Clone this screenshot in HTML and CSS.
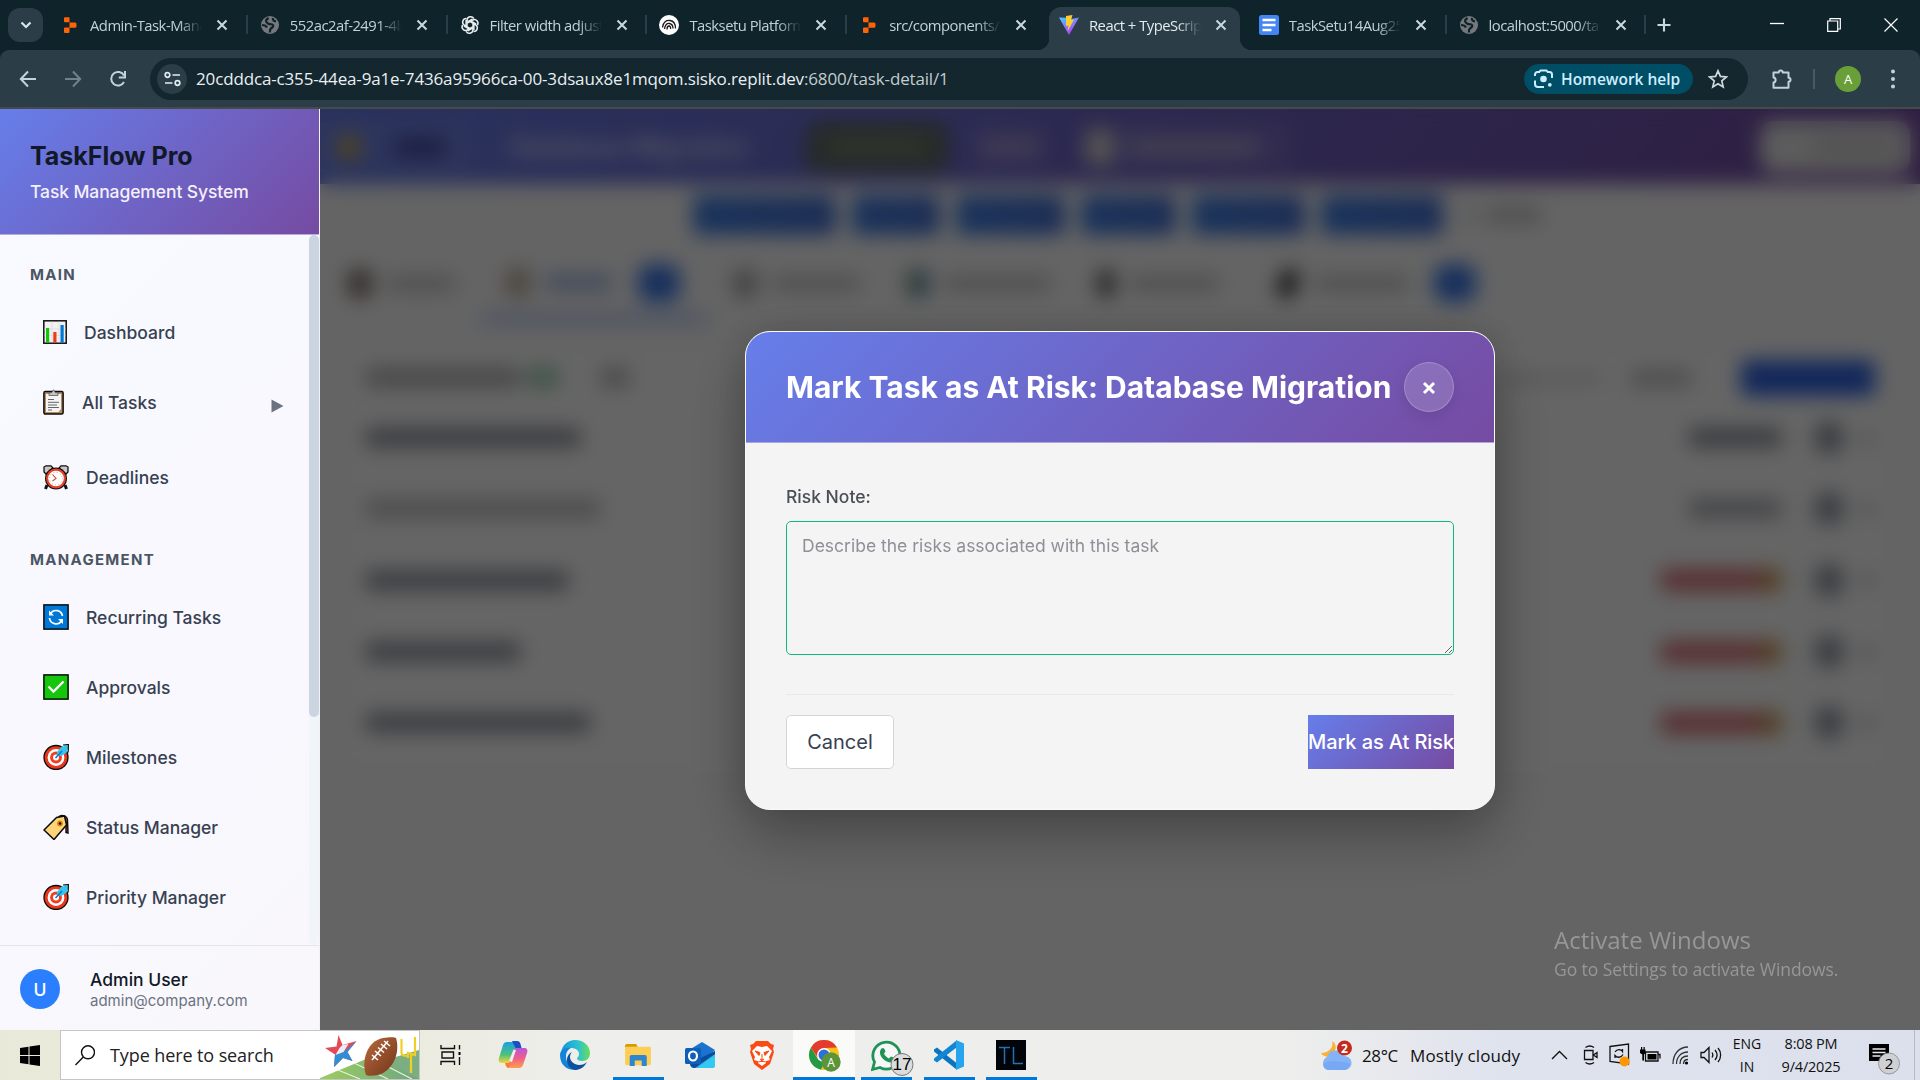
FILE: index.html
```html
<!DOCTYPE html>
<html lang="en">
<head>
<meta charset="utf-8">
<title>TaskFlow Pro</title>
<link rel="stylesheet" href="styles.css">
</head>
<body>
<svg class="defs" width="0" height="0" aria-hidden="true">
  <defs>
    <symbol id="close" viewBox="0 0 12 12"><path d="M1.5 1.5l9 9M10.5 1.5l-9 9" stroke="currentColor" stroke-width="2" fill="none"/></symbol>
    <symbol id="replit" viewBox="0 0 20 20"><path d="M4 3.2a1 1 0 0 1 1-1h4.500v5H5a1 1 0 0 1-1-1zM9.500 7.500h5.500a1.500 1.500 0 0 1 1.500 1.500v2.200a1.500 1.500 0 0 1-1.500 1.500H9.500zM4 13.500a1 1 0 0 1 1-1h4.500v4.500a1 1 0 0 1-1 1H5a1 1 0 0 1-1-1z" fill="#ff6308"/></symbol>
    <symbol id="globe" viewBox="0 0 20 20"><circle cx="10" cy="10" r="9" fill="#75797c"/><path d="M8.500 3C5.500 5 5 6.500 8 8.500c2.500 1.500 4 0 5 1.500s-.5 2.500-2 3.500-1 2.500-1 4M2 10c2 0 4 .5 5 2.500M13 3c-.5 2 .5 3 3 3.500" fill="none" stroke="#0f232b" stroke-width="2.200"/></symbol>
    <symbol id="target" viewBox="0 0 26 26"><circle cx="13" cy="13.500" r="12" fill="#e8371a" stroke="#0b0b0b" stroke-width="1.300"/><circle cx="13" cy="13.500" r="8.400" fill="#fff"/><circle cx="13" cy="13.500" r="5.900" fill="#ef3f22"/><circle cx="13" cy="13.500" r="3" fill="#fff"/><path d="M14 8l5-6 2 .5.500-1.500 4 .5-.5 4-1 .5.500 2-6 4-4.500-1z" fill="#35c4ee"/><path d="M20 1l5.500-.5-.3 7-1 2" fill="none" stroke="#111" stroke-width="1.200"/><path d="M12.500 14l6.500-7" stroke="#0b78c8" stroke-width="1.500"/></symbol>
  </defs>
</svg>

<header class="tabstrip">
  <button class="tabsearch"><svg width="14" height="14" viewBox="0 0 14 14"><path d="M2.500 4.500L7 9l4.500-4.500" fill="none" stroke="currentColor" stroke-width="2.200"/></svg></button>
  <div class="tab"><svg class="fav"><use href="#replit"/></svg><span class="tt">Admin-Task-Manager</span><svg class="x"><use href="#close"/></svg></div>
  <div class="tab"><svg class="fav"><use href="#globe"/></svg><span class="tt">552ac2af-2491-4b1e</span><svg class="x"><use href="#close"/></svg></div>
  <div class="tab"><svg class="fav" viewBox="0 0 20 20"><g fill="none" stroke="#e9eef0" stroke-width="1.500"><path id="petal" d="M7 11.500V5.200a3.600 3.600 0 0 1 6.800-1.500M7 7.200l5.300-3"/><use href="#petal" transform="rotate(60 10 10)"/><use href="#petal" transform="rotate(120 10 10)"/><use href="#petal" transform="rotate(180 10 10)"/><use href="#petal" transform="rotate(240 10 10)"/><use href="#petal" transform="rotate(300 10 10)"/></g></svg><span class="tt">Filter width adjustment</span><svg class="x"><use href="#close"/></svg></div>
  <div class="tab"><svg class="fav" viewBox="0 0 20 20"><circle cx="10" cy="10" r="10" fill="#fff"/><g fill="none" stroke="#1b1b1b" stroke-width="1.300"><path d="M3.500 12.500C4 7 7.500 5 11 5.500s5.500 4 5.500 8"/><path d="M5.500 14c.5-4 2.500-6 5-5.500s3.500 3 3.500 5"/><path d="M8 14.500c0-2.500 1-3.500 2-3.500s2 1.500 1.500 3"/></g></svg><span class="tt">Tasksetu Platform</span><svg class="x"><use href="#close"/></svg></div>
  <div class="tab nosep"><svg class="fav"><use href="#replit"/></svg><span class="tt">src/components/tasks</span><svg class="x"><use href="#close"/></svg></div>
  <div class="tab active"><svg class="fav" viewBox="0 0 20 20"><defs><linearGradient id="v" x1="0" y1="0" x2=".6" y2="1"><stop offset="0" stop-color="#41d1ff"/><stop offset="1" stop-color="#bd34fe"/></linearGradient></defs><path d="M0 2.500l10 17.500L20 2.500l-6.500 1.200-6-1z" fill="url(#v)"/><path d="M7 1l6.500-1-1.500 5 3-.5L8.500 16.500l1-6L7 11z" fill="#ffcf2e"/></svg><span class="tt">React + TypeScript</span><svg class="x"><use href="#close"/></svg></div>
  <div class="tab"><svg class="fav" viewBox="0 0 20 20"><rect width="20" height="20" rx="2.500" fill="#4285f4"/><path d="M3.500 5h13M3.500 10h13M3.500 15h9" stroke="#fff" stroke-width="2.400"/></svg><span class="tt">TaskSetu14Aug25</span><svg class="x"><use href="#close"/></svg></div>
  <div class="tab"><svg class="fav"><use href="#globe"/></svg><span class="tt">localhost:5000/tasks</span><svg class="x"><use href="#close"/></svg></div>
  <svg class="newtab" width="14" height="14" viewBox="0 0 14 14"><path d="M7 .5v13M.5 7h13" stroke="currentColor" stroke-width="2.100"/></svg>
  <div class="winbtns">
    <svg width="14" height="14" viewBox="0 0 14 14"><path d="M0 5.500h14" stroke="#fff" stroke-width="1.300"/></svg>
    <svg width="14" height="14" viewBox="0 0 14 14"><path d="M.7 3h10v10.300H.7zM3 3V.7h10.300V11h-2.500" fill="none" stroke="#fff" stroke-width="1.200"/></svg>
    <svg width="14" height="14" viewBox="0 0 14 14"><path d="M.5.5l13 13M13.500.5l-13 13" stroke="#fff" stroke-width="1.200"/></svg>
  </div>
</header>

<nav class="toolbar">
  <svg width="18" height="18" viewBox="0 0 18 18"><path d="M17 9H2.500M9 1.500L1.800 9 9 16.500" fill="none" stroke="#c3d3da" stroke-width="2"/></svg>
  <svg width="18" height="18" viewBox="0 0 18 18"><path d="M1 9h14.500M9 1.500L16.200 9 9 16.500" fill="none" stroke="#71828a" stroke-width="2"/></svg>
  <svg width="18" height="18" viewBox="0 0 18 18"><path d="M15 12a6.800 6.800 0 1 1 0-6.500" fill="none" stroke="#c3d3da" stroke-width="2"/><path d="M16 1v6.500H9.800" fill="none" stroke="#c3d3da" stroke-width="2"/></svg>
  <div class="omnibox">
    <span class="tune"><svg width="17" height="16" viewBox="0 0 17 16"><g fill="none" stroke="#e4edf0" stroke-width="1.700"><circle cx="3.500" cy="4" r="2.300"/><path d="M8.500 4H16M1 12h7.500"/><circle cx="13.500" cy="12" r="2.300"/></g></svg></span>
    <span class="url">20cdddca-c355-44ea-9a1e-7436a95966ca-00-3dsaux8e1mqom.sisko.replit.dev<span class="path">:6800/task-detail/1</span></span>
    <span class="lens"><svg width="19" height="19" viewBox="0 0 19 19"><g fill="none" stroke="#cdeeff" stroke-width="2"><path d="M1 7V5.500A2.500 2.500 0 0 1 3.500 3h1.800L6.500 1.500h6L13.700 3h1.800A2.500 2.500 0 0 1 18 5.500V9M1 11.500V15a3 3 0 0 0 3 3h6"/></g><circle cx="9.500" cy="10" r="3.300" fill="#cdeeff"/><circle cx="15.800" cy="15.800" r="1.900" fill="#cdeeff"/></svg><b>Homework help</b></span>
    <svg class="star" width="20" height="20" viewBox="0 0 20 20"><path d="M10 1.800l2.400 5.600 6 .5-4.600 4 1.400 6L10 14.700l-5.200 3.200 1.400-6-4.600-4 6-.5z" fill="none" stroke="#cfd9dd" stroke-width="1.700"/></svg>
  </div>
  <svg class="ext" width="22" height="22" viewBox="0 0 22 22"><path d="M2.500 4.500h5.200a2 2 0 1 1 4 0h5.800v5.200a2 2 0 1 1 0 4v6h-15v-5.200c2.800-.2 2.800-4.800 0-5z" fill="none" stroke="#c3d3da" stroke-width="2" stroke-linejoin="round"/></svg>
  <i class="vsep"></i>
  <span class="ava">A</span>
  <svg class="dots" width="4" height="20" viewBox="0 0 4 20"><g fill="#c3d3da"><circle cx="2" cy="2.500" r="2"/><circle cx="2" cy="10" r="2"/><circle cx="2" cy="17.500" r="2"/></g></svg>
</nav>

<div class="page">
  <aside class="sidebar">
    <div class="brand"><h1>TaskFlow Pro</h1><p>Task Management System</p></div>
    <div class="menu">
      <div class="links">
        <h2>MAIN</h2>
        <a class="it"><svg width="24" height="24" viewBox="0 0 24 24"><rect x=".8" y=".8" width="22.400" height="22.400" fill="#f2f2f2" stroke="#1c1c1c" stroke-width="1.600"/><path d="M9 1.500v21M16 1.500v21M1.500 9h21M1.500 15.500h21" stroke="#dcdcdc" stroke-width=".8"/><path d="M3 8h3.200v14.400H3z" fill="#16c60c"/><path d="M10.300 12h3.200v10.400h-3.200z" fill="#f03a17"/><path d="M17.500 5h3.200v17.400h-3.200z" fill="#0078d7"/></svg>Dashboard</a>
        <a class="it all"><svg width="21" height="26" viewBox="0 0 21 26"><rect x=".9" y="2.500" width="19.200" height="22.600" rx="1.500" fill="#b98a5e" stroke="#0b0b0b" stroke-width="1.500"/><path d="M3 5h15v15l-2.500 3H3z" fill="#f4f4f4"/><path d="M6 6.500V3.800h2.500L10.500.8l2 3H15v2.700z" fill="#c3c6c4" stroke="#4a4a4a" stroke-width=".7"/><path d="M5 10.500h6M5 13.300h11M5 16h9M5 18.500h11M5 21h4" stroke="#555" stroke-width=".9"/></svg>All Tasks<svg class="arrow" width="13" height="14" viewBox="0 0 13 14"><path d="M.5.500L12.500 7 .5 13.500z" fill="#6b7280"/></svg></a>
        <a class="it wide last"><svg width="26" height="25" viewBox="0 0 26 25"><path d="M4 20l-1.500 4M22 20l1.500 4" stroke="#111" stroke-width="3"/><path d="M1 7V2l2-1.200h5L10 3 3 9zM25 7V2L23 .8h-5L16 3l7 6z" fill="#c9c9c9" stroke="#111" stroke-width="1.300"/><circle cx="13" cy="13.500" r="11" fill="#111"/><circle cx="13" cy="13.500" r="10" fill="#e8432a"/><circle cx="13" cy="13.500" r="7.800" fill="#fff"/><circle cx="13" cy="13.500" r="6.300" fill="none" stroke="#999" stroke-dasharray=".8 2.500"/><path d="M9.500 9.500l3.500 4-3.500 2.500" fill="none" stroke="#d3482d" stroke-width="1.100"/></svg>Deadlines</a>
        <h2 class="mg">MANAGEMENT</h2>
        <a class="it wide"><svg width="26" height="26" viewBox="0 0 26 26"><rect x=".9" y=".9" width="24.200" height="24.200" fill="#0078d7" stroke="#0a0a0a" stroke-width="1.500"/><path d="M7.500 9.500A6.600 6.600 0 0 1 19.500 12M18.500 17A6.600 6.600 0 0 1 6.500 14" fill="none" stroke="#fff" stroke-width="1.700"/><path d="M6 6.500v5h5zM20 20v-5h-5z" fill="#fff"/></svg>Recurring Tasks</a>
        <a class="it wide"><svg width="26" height="26" viewBox="0 0 26 26"><rect x=".9" y=".9" width="24.200" height="24.200" fill="#16c60c" stroke="#0a0a0a" stroke-width="1.500"/><path d="M5.500 12.500l5 5L20.500 7.500" fill="none" stroke="#fff" stroke-width="2.300"/></svg>Approvals</a>
        <a class="it wide"><svg width="26" height="26"><use href="#target"/></svg>Milestones</a>
        <a class="it wide"><svg width="26" height="26" viewBox="0 0 26 26"><path d="M15 4c2-4 9-3 9.500 2l.5 13-2-.5V8" fill="#c5401f" stroke="#0b0b0b" stroke-width="1.400"/><path d="M1 16L13.500 3.500l8-1.500 2 9L11 25.500z" fill="#ffd479" stroke="#0b0b0b" stroke-width="1.500" stroke-linejoin="round"/><circle cx="17" cy="9.500" r="2.900" fill="#d98a0b"/><circle cx="17" cy="9.500" r="1.300" fill="#241000"/></svg>Status Manager</a>
        <a class="it wide"><svg width="26" height="26"><use href="#target"/></svg>Priority Manager</a>
      </div>
      <div class="track"><div class="thumb"></div></div>
    </div>
    <div class="user"><span class="uava">U</span><div><strong>Admin User</strong><small>admin@company.com</small></div></div>
  </aside>

  <main class="main">
    <div class="hd">
      <span class="back"><i class="sm ye"></i><i class="sm dk"></i></span>
      <h2 class="tn">Database Migration</h2>
      <span class="status"><i></i></span>
      <span class="prio"><i></i></span>
      <span class="who"><i class="face"></i><i class="nm"></i></span>
      <span class="more"><i></i></span>
    </div>
    <div class="acts">
      <i style="width:143px"></i><i style="width:88px"></i><i style="width:109px"></i><i style="width:95px"></i><i style="width:113px"></i><i style="width:122px"></i><b></b><b class="w2"></b>
    </div>
    <div class="ptabs">
      <span style="width:134px"><i class="ic br"></i><i class="lb" style="width:66px"></i></span>
      <span class="on" style="width:225px"><i class="ic"></i><i class="lb bl" style="width:66px"></i><i class="bd"></i></span>
      <span style="width:175px"><i class="ic gy"></i><i class="lb" style="width:86px"></i></span>
      <span style="width:186px"><i class="ic gn"></i><i class="lb" style="width:104px"></i></span>
      <span style="width:178px"><i class="ic bk"></i><i class="lb" style="width:88px"></i></span>
      <span style="width:226px"><i class="ic cl"></i><i class="lb" style="width:92px"></i><i class="bd"></i></span>
    </div>
    <div class="card">
      <div class="chead"><i class="c1"></i><i class="c2"></i><i class="c3"></i><i class="c4"></i><i class="c5"></i><i class="c6"></i></div>
      <div class="row"><i class="nm" style="width:214px"></i><i class="dt"></i><i class="av"></i><i class="dd"></i></div>
      <div class="row"><i class="nm lt" style="width:234px"></i><i class="dt lt"></i><i class="av"></i><i class="dd"></i></div>
      <div class="row"><i class="nm" style="width:202px"></i><i class="dt rd"></i><i class="av"></i><i class="dd"></i></div>
      <div class="row"><i class="nm" style="width:154px"></i><i class="dt rd"></i><i class="av"></i><i class="dd"></i></div>
      <div class="row"><i class="nm" style="width:224px"></i><i class="dt rd"></i><i class="av"></i><i class="dd"></i></div>
    </div>
    <div class="overlay">
      <section class="modal">
        <div class="mhead"><h3>Mark Task as At Risk: Database Migration</h3><button class="mclose"><svg width="14" height="14" viewBox="0 0 14 14"><path d="M2 2l10 10M12 2L2 12" stroke="#fff" stroke-width="3"/></svg></button></div>
        <div class="mbody">
          <label>Risk Note:</label>
          <textarea placeholder="Describe the risks associated with this task"></textarea>
          <div class="mfoot"><button class="cancel">Cancel</button><button class="go">Mark as At Risk</button></div>
        </div>
      </section>
    </div>
    <div class="activate"><p>Activate Windows</p><small>Go to Settings to activate Windows.</small></div>
  </main>
</div>

<footer class="taskbar">
  <span class="start"><svg width="20" height="21" viewBox="0 0 20 21"><path d="M0 3l8.500-1.300v8.300H0zM9.500 1.500L20 0v10H9.500zM0 11h8.500v8.300L0 18zM9.500 11H20v10L9.500 19.500z"/></svg></span>
  <div class="search">
    <svg width="20" height="21" viewBox="0 0 20 21"><circle cx="13" cy="7.300" r="6.500" fill="none" stroke="#111" stroke-width="1.400"/><path d="M8.300 12L.5 20" stroke="#111" stroke-width="1.400"/></svg>
    <span class="type">Type here to search</span>
    <svg class="art" width="99" height="48" viewBox="0 0 99 48">
      <defs><linearGradient id="fld"><stop offset="0" stop-color="#9ccc60"/><stop offset="1" stop-color="#6ea680"/></linearGradient><linearGradient id="ball" x1="0" y1="0" x2="1" y2="1"><stop offset="0" stop-color="#b96a3c"/><stop offset="1" stop-color="#70351c"/></linearGradient></defs>
      <path d="M0 47L62 21.500 99 40v8H0z" fill="url(#fld)"/><path d="M62 30L99 19v29z" fill="#7dae82"/><path d="M18 39l22 9M35 32.500L68 48M50 26.500L92 48" stroke="#e5f0d8" stroke-width="1.200"/>
      <g transform="translate(3)">
      <path d="M15.500 4l4 10 14-4-9 11 5 9-9.500-3-9 9 1-12.500L2 17l11.500-1.500z" fill="#e34a55"/><path d="M33.500 10l-9 11 5 9-9.500-3-9 9 1-12.500 8-2z" fill="#2f8fd6"/><path d="M19.500 14l6-1-5 8-8 3 4-7z" fill="#e9eef7"/>
      <path d="M43 44C38 30 44 10 60 7c6-1 12-1 13 0 4 12-1 32-18 37-5 1-10 1-12 0z" fill="url(#ball)"/><path d="M49 29L65 10M49 24l6 5M52 20l6 5M55 16.500l6 5M58 13l6 5M61 10l6 5" stroke="#fff" stroke-width="1.500"/>
      </g>
      <path d="M81.500 8v14c0 3 3 3 6 3M95 6v18l-7-2v5M91 24v18" fill="none" stroke="#f0cf26" stroke-width="2.200"/>
    </svg>
  </div>
  <div class="apps">
  <span class="app"><svg width="22" height="22" viewBox="0 0 22 22"><path d="M1 1v3.500h13.500V1M1 21v-3.500h13.500V21M2 8h11.500v6H2zM19.500 1v4.500M19.500 13v8" fill="none" stroke="#111" stroke-width="1.400"/><path d="M18.500 8h2v3h-2z"/></svg></span>
  <span class="app"><svg width="30" height="30" viewBox="0 0 30 30"><defs><linearGradient id="c1" x1="0" y1="0" x2="0" y2="1"><stop offset="0" stop-color="#1ba0e8"/><stop offset=".6" stop-color="#4cc27a"/><stop offset="1" stop-color="#f6d33c"/></linearGradient><linearGradient id="c2" x1="0" y1="0" x2="0" y2="1"><stop offset="0" stop-color="#b558d8"/><stop offset=".5" stop-color="#ee5e8e"/><stop offset="1" stop-color="#ff9d4a"/></linearGradient></defs><path d="M9 2h8c2 0 3 1.500 2.500 3L15 20c-1 2-2 3-4 3H4c-3 0-4-2-3-5L5 5c.7-2 2-3 4-3z" fill="url(#c1)"/><path d="M14 1h5c2 0 3 1 3.500 3l1 4h-6z" fill="#1d4fc4"/><path d="M21 28h-8c-2 0-3-1.500-2.500-3L15 11c1-2 2-3 4-3h7c3 0 4 2 3 5l-4 12c-.7 2-2 3-4 3z" fill="url(#c2)"/><path d="M7 23h6l-2 5c-2 0-3-1-4-5z" fill="#ff7a3d"/><path d="M15.500 9.500L18 10l-4 12-3-1z" fill="#f5ecef"/></svg></span>
  <span class="app"><svg width="30" height="30" viewBox="0 0 30 30"><defs><linearGradient id="e1"><stop offset="0" stop-color="#1595dc"/><stop offset=".6" stop-color="#2cc3cf"/><stop offset="1" stop-color="#6ddc54"/></linearGradient></defs><path d="M1 13C2 5 8 0 15 0c9 0 15 6 15 13 0 5-3 8-8 8-3 0-5-1-5-3 1-1 2-2 2-4 0-4-4-6-8-6-5 0-9 2-10 5z" fill="url(#e1)"/><path d="M0 15c0-5 5-8 11-7-4 2-5 5-5 9 0 7 6 12 12 12-9 3-18-3-18-14z" fill="#1584d6"/><path d="M12 12c-3 3-3 9 3 12 4 2 9 1 12-2-3 6-8 8-12 8-9-2-11-14-3-18z" fill="#0c519f"/></svg></span>
  <span class="app open"><svg width="28" height="24" viewBox="0 0 30 26"><path d="M1 3a2 2 0 0 1 2-2h10l2 4H1z" fill="#d99a00"/><rect x="1" y="4" width="28" height="20" rx="1.500" fill="#fdce53"/><path d="M6 25V15a2 2 0 0 1 2-2h14.500a2 2 0 0 1 2 2v10H19v-6h-7.500v6z" fill="#2f86d0"/></svg></span>
  <span class="app"><svg width="30" height="28" viewBox="0 0 30 28"><path d="M4 9L17 1l13 8-10 9H4z" fill="#1b73cf"/><path d="M30 10v14a3 3 0 0 1-3 3H9c-3 0-4-2-4-4z" fill="#27b4ea"/><path d="M5 22L30 10v3L10 27c-3 0-5-2-5-5z" fill="#0b4c9c"/><path d="M12 27l18-13v10a3 3 0 0 1-3 3z" fill="#35c8f0"/><rect y="7" width="16" height="16" rx="1.500" fill="#0f5fb8"/><ellipse cx="8" cy="15" rx="4" ry="4.500" fill="none" stroke="#fff" stroke-width="2.200"/></svg></span>
  <span class="app"><svg width="26" height="30" viewBox="0 0 26 30"><path d="M7 1h12l3 3 3 1-1 4 1 3-4 12-8 6-8-6L1 12l1-3L1 5l3-1z" fill="#fb4a14"/><path d="M8 6l5 1 5-1 5 5-3 6 1 3-5 1.500 1 1.500-4 3-4-3 1-1.500L5 20l1-3-3-6z" fill="#fff"/><path d="M6 11l5 1.500-1 3zM20 11l-5 1.500 1 3zM11 19l2 1 2-1M13 14v5M10 22l3-1.500 3 1.500" fill="#fb4a14" stroke="#fb4a14"/></svg></span>
  <span class="app open cur"><svg width="32" height="32" viewBox="0 0 32 32"><circle cx="15" cy="15" r="15" fill="#fbc116"/><path d="M2 7.500A15 15 0 0 1 28 7.500L15 8 9 18z" fill="#e33b2e"/><path d="M2 7.500l7 12 6 3-3 7.200A15 15 0 0 1 2 7.500z" fill="#229a4a"/><circle cx="15" cy="15" r="7" fill="#fff"/><circle cx="15" cy="15" r="5.500" fill="#2b6fe0"/><circle cx="22" cy="22" r="9.700" fill="#5c9439"/><text x="22" y="26.500" class="ba">A</text></svg></span>
  <span class="app open"><svg class="wa" width="43" height="36" viewBox="0 0 43 36"><path d="M1.500 29.500L3.500 22A13.500 13.500 0 1 1 9 27.500z" fill="#f4f7f5" stroke="#1f9355" stroke-width="2.800"/><path d="M10.500 8.500c2-1.500 3 0 4 3l-1.500 2c1 2.500 3 4 5 5l2-2c3 1 4 2 3 4-2 3-6 2-9 0-4-3-7-8-3.500-12z" fill="#1f9355"/><circle cx="31" cy="24.500" r="11" fill="#dcdcdc" stroke="#777" stroke-width="1"/><text x="31" y="30" class="bn">17</text></svg></span>
  <span class="app open"><svg width="30" height="30" viewBox="0 0 30 30"><path d="M0 9.500L3 7.500 22.500 23v6.500L0 11.500z" fill="#0a74bd"/><path d="M0 20.500L3 22.500 22.500 7.500V0.500L0 18.500z" fill="#1286d2"/><path d="M22 0l8 3.500v23L22 30z" fill="#28a4ef"/></svg></span>
  <span class="app open"><svg width="30" height="30" viewBox="0 0 30 30"><rect width="30" height="30" fill="#010409"/><path d="M3 7.500h11M8.500 7.500V24M17.500 7v16.500H27" fill="none" stroke="#2472b5" stroke-width="1.500"/></svg></span>
  </div>

  <div class="tray">
    <svg width="31" height="31" viewBox="0 0 31 31"><path d="M11 1c2 6-3 12-11 12 3 5 10 5 13 0s2-10-2-12z" fill="#f9b233"/><path d="M7 30a7 7 0 0 1-1-13 9 9 0 0 1 17-1 7 7 0 0 1 1 14z" fill="#84b4f7"/><path d="M2 24c6-4 20-3 27 0-1 4-3 6-6 6H7c-3 0-5-3-5-6z" fill="#6f9ff0" opacity=".6"/><circle cx="23.500" cy="8" r="7.500" fill="#c42b1c"/><text x="23.500" y="12.500" class="wn">2</text></svg>
    <span class="temp">28°C</span><span class="cond">Mostly cloudy</span>
    <svg class="s1" width="17" height="10" viewBox="0 0 17 10"><path d="M1 9l7.500-7.500L16 9" fill="none" stroke="#111" stroke-width="1.400"/></svg>
    <svg class="s2" width="16" height="20" viewBox="0 0 16 20"><path d="M2.500 2.500C5 .7 8.500 .7 11 2.500M2.500 17.500c2.500 1.800 6 1.800 8.500 0M1.500 5.500h8.500v9H1.500zM10.500 10l3.500-2.500v5z" fill="none" stroke="#111" stroke-width="1.300"/></svg>
    <svg class="s3" width="22" height="24" viewBox="0 0 22 24"><path d="M1 3.500L19.500 1v20L1 18.500zM6 9c2-3 6-3 7.500-.5V6M14 11.500c-2 3.500-6 3.500-8 1V15" fill="none" stroke="#111" stroke-width="1.300"/><circle cx="15.500" cy="18.500" r="5" fill="#ff9500"/></svg>
    <svg class="s4" width="21" height="17" viewBox="0 0 21 17"><path d="M5.500 5H18v9H5.500zM18.500 7.500h1.500v4" fill="none" stroke="#111" stroke-width="1.300"/><path d="M7.500 7h9v5.500h-9zM0 2.500h5.500V6L4 7.500v6H2.300v-6L0 6zM1 0h1.200v3H1zM3.500 0h1.200v3H3.500z"/></svg>
    <svg class="s5" width="17" height="19" viewBox="0 0 17 19"><path d="M1 18C1 8 7 1 16 1M4.500 18c0-7 4.500-12 11.500-12M8 18c0-5 3-8 8-8M11.500 18c0-3 1.500-4.500 4.500-4.500" fill="none" stroke="#333" stroke-width="1.300"/><circle cx="14.500" cy="17" r="1.600"/></svg>
    <svg class="s6" width="22" height="18" viewBox="0 0 22 18"><path d="M1 6.500h3l5-5v15l-5-5H1zM12 6.500c1 1.500 1 3.500 0 5M15 4c2.500 3 2.500 7 0 10M18 2c3.500 4 3.500 10 0 14" fill="none" stroke="#111" stroke-width="1.300"/></svg>
    <span class="lang">ENG<br>IN</span>
    <span class="clock">8:08 PM<br>9/4/2025</span>
    <svg class="s7" width="32" height="32" viewBox="0 0 32 32"><path d="M0 1h20v17h-6l-4 4v-4H0z"/><path d="M3.500 6h13M3.500 9.500h13M3.500 13h8" stroke="#e6e9f0" stroke-width="1.300"/><circle cx="20" cy="20.500" r="10.500" fill="#cfd0d3" stroke="#888" stroke-width=".8"/><text x="20" y="26" class="bn2">2</text></svg>
    <i class="desk"></i>
  </div>
</footer>
</body>
</html>
```
FILE: styles.css
```css
* { box-sizing: border-box; }
body { margin: 0; width: 1920px; height: 1080px; overflow: hidden; font-family: "Inter", sans-serif; display: flex; flex-direction: column; background: #0f232b; }
h1, h2, h3, p { margin: 0; }
button { padding: 0; border: 0; font-family: inherit; }
i { display: block; flex: none; }
svg { flex: none; display: block; }
.defs { position: absolute; }

/* browser tabs */
.tabstrip { height: 50px; flex: none; background: #0f232b; display: flex; align-items: center; font-family: "Open Sans", sans-serif; color: #bfd2da; padding-left: 8px; }
.tabsearch { width: 35px; height: 34px; border-radius: 12px; background: #2b3d46; color: #dbe6ea; display: flex; align-items: center; justify-content: center; margin-right: 7px; }
.tab { width: 199.800px; height: 50px; display: flex; align-items: center; padding-left: 10px; position: relative; flex: none; }
.tab::after { content: ""; position: absolute; right: 2px; top: 15px; width: 2px; height: 19px; background: #2b3d46; }
.tab.nosep::after { display: none; }
.fav { width: 20px; height: 20px; margin-right: 10px; }
.tt { width: 113px; overflow: hidden; white-space: nowrap; font-size: 14.800px; letter-spacing: -.5px; line-height: 22px; -webkit-mask-image: linear-gradient(90deg, #000 78%, transparent 99%); mask-image: linear-gradient(90deg, #000 78%, transparent 99%); }
.x { width: 12px; height: 12px; margin-left: 13px; color: #c9d8de; }
.tab.active { color: #e3edf0; }
.tab.active > * { position: relative; z-index: 1; }
.tab.active::before { content: ""; position: absolute; left: 0; width: 191px; top: 7px; bottom: 0; border-radius: 12px 12px 0 0; background: #2b3d46; }
.tab.active::after { left: -12px; right: auto; top: 38px; width: 215px; height: 12px; background: radial-gradient(circle at 0 0, transparent 12px, #2b3d46 12.500px) left / 12px 12px no-repeat, radial-gradient(circle at 100% 0, transparent 12px, #2b3d46 12.500px) right / 12px 12px no-repeat; }
.newtab { margin: 0 0 0 9px; color: #c9d8de; }
.winbtns { margin-left: auto; display: flex; gap: 43px; padding-right: 22px; }

/* address bar */
.toolbar { height: 59px; flex: none; background: #2b3d46; border-bottom: 2px solid #474a4b; border-radius: 9px 9px 0 0; display: flex; align-items: center; padding-left: 19px; gap: 27px; font-family: "Open Sans", sans-serif; }
.omnibox { width: 1598px; height: 42px; border-radius: 21px; background: #14262e; display: flex; align-items: center; padding: 0 20px 0 7px; margin-left: -4px; }
.tune { width: 30px; height: 30px; border-radius: 50%; background: #2b3d46; display: flex; align-items: center; justify-content: center; margin-right: 9px; }
.url { color: #e8f0f3; font-size: 17px; letter-spacing: -.15px; white-space: nowrap; flex: 1; }
.path { color: #c2cdd1; }
.lens { width: 169px; height: 30px; border-radius: 15px; background: #004d66; color: #cdeeff; display: flex; align-items: center; gap: 8px; padding-left: 10px; margin-right: 15px; }
.lens b { font-weight: 600; font-size: 15.500px; white-space: nowrap; }
.ext { margin-left: -4px; }
.vsep { width: 2px; height: 20px; background: #465a64; margin-left: -7px; }
.ava { width: 26px; height: 26px; border-radius: 50%; background: #689f38; color: #fff; font-size: 13px; display: flex; align-items: center; justify-content: center; margin-left: -7px; }
.dots { margin-left: 3px; }

.page { height: 921px; flex: none; display: flex; }

/* sidebar */
.sidebar { width: 320px; height: 921px; flex: none; border-right: 1px solid #f1f1f6; background: linear-gradient(135deg, #f8faff 0%, #f8f8fe 55%, #f9f7fc 100%); display: flex; flex-direction: column; }
.brand { height: 126px; padding: 31px 30px 0; background: linear-gradient(135deg, #667eea, #764ba2); border-bottom: 1px solid #b9a9dc; }
.brand h1 { font-size: 25px; line-height: 32px; font-weight: 700; color: #111827; }
.brand p { font-size: 17.500px; line-height: 26px; margin-top: 7px; font-weight: 500; color: #f3effb; letter-spacing: -.1px; }
.menu { height: 710px; display: flex; }
.links { flex: 1; }
.links h2 { font-size: 15px; line-height: 20px; font-weight: 700; letter-spacing: 1.300px; color: #4b5563; padding: 30px 0 0 30px; height: 62px; }
.links h2.mg { height: 65px; padding-top: 33px; }
.it { display: flex; align-items: center; height: 70px; padding-left: 43px; gap: 17px; font-size: 17.500px; font-weight: 500; color: #374151; }
.it.all { gap: 18px; }
.it.last { height: 80px; }
.arrow { margin-left: 96px; margin-top: 8px; }
.track { width: 10px; background: #f1f5f9; border-radius: 5px; }
.thumb { height: 482px; background: #cbd5e1; border-radius: 5px; }
.user { height: 85px; border-top: 1px solid #e3e5ec; display: flex; align-items: center; padding: 2px 0 0 20px; gap: 30px; }
.uava { width: 40px; height: 40px; border-radius: 50%; background: #2b7fff; color: #fff; font-weight: 500; font-size: 17.500px; display: flex; align-items: center; justify-content: center; }
.user strong, .user small { display: block; }
.user strong { font-size: 17.500px; line-height: 23px; font-weight: 500; color: #111827; }
.user small { font-size: 15px; line-height: 20px; color: #6b7280; }

/* task page behind the dialog */
.main { position: relative; width: 1600px; height: 921px; background: #fafafa; overflow: hidden; }
.hd { height: 75px; background: linear-gradient(135deg, #667eea, #764ba2); display: flex; align-items: center; }
.back { width: 150px; height: 50px; background: rgba(255,255,255,.08); display: flex; align-items: center; padding-left: 18px; gap: 34px; }
.ye { width: 22px; height: 24px; background: #c8aa4c; border-radius: 6px; }
.dk { width: 52px; height: 18px; background: #4347a0; }
.tn { margin-left: 40px; width: 296px; font-size: 25px; font-weight: 700; color: #f0ecfc; opacity: .85; white-space: nowrap; }
.status { width: 142px; height: 50px; border-radius: 12px; background: #5c6a62; padding: 16px 22px; }
.status i { height: 17px; background: #7b8670; }
.prio { margin-left: 26px; width: 72px; height: 38px; background: rgba(255,255,255,.1); padding: 11px 8px; }
.prio i { height: 16px; background: #a795cc; }
.who { margin-left: 34px; width: 210px; height: 44px; background: rgba(255,255,255,.1); display: flex; align-items: center; padding-left: 6px; gap: 14px; }
.face { width: 28px; height: 36px; border-radius: 10px; background: #d8d2cc; }
.who .nm { width: 130px; height: 16px; background: #aea3cc; }
.more { margin-left: auto; margin-right: 10px; width: 150px; height: 52px; border-radius: 14px; background: #e6e6e6; padding: 17px 14px 17px 52px; }
.more i { height: 17px; background: #cacacc; }
.acts { height: 61px; display: flex; align-items: center; padding: 0 0 0 373px; gap: 16px; }
.acts i { height: 40px; border-radius: 4px; background: linear-gradient(90deg, #417fe2, #4872d4); }
.acts b { width: 14px; height: 16px; background: #e0e0e0; margin-left: 4px; }
.acts b.w2 { width: 54px; background: #c4c4c4; margin-left: -6px; }
.ptabs { height: 76px; display: flex; padding-left: 28px; }
.ptabs span { height: 76px; display: flex; align-items: center; gap: 16px; flex: none; }
.ptabs .on { border-bottom: 5px solid #6a94ee; padding: 4px 0 0 24px; }
.ic { width: 24px; height: 29px; border-radius: 8px; background: #bcae99; }
.ic.br { background: #7d7166; }
.ic.gy { background: #aaa; }
.ic.gn { background: linear-gradient(90deg, #7ea67c, #6e8fc0); }
.ic.bk { width: 16px; background: #505050; }
.ic.cl { background: #333; transform: rotate(20deg) scaleX(.75); }
.ptabs span:nth-child(3) { padding-left: 26px; }
.ptabs span:nth-child(4) { padding-left: 24px; }
.ptabs span:nth-child(5) { padding-left: 30px; }
.ptabs span:nth-child(6) { padding-left: 30px; }
.lb { height: 15px; background: #c2c4c4; }
.lb.bl { background: #9fb4e4; }
.bd { width: 42px; height: 38px; border-radius: 12px; background: #3d79e8; margin-left: 10px; }
.ptabs span:nth-child(6) .bd { margin-left: 10px; }
.card { margin: 26px 30px 0 25px; padding: 0 0 12px 20px; background: #fdfdfd; border: 1px solid #e8e8ea; }
.chead { height: 70px; padding-bottom: 9px; display: flex; align-items: center; margin-top: -1px; }
.c1 { width: 155px; height: 19px; background: #b2b2b6; }
.c2 { width: 28px; height: 19px; background: #94ccaa; margin-left: 8px; }
.c3 { width: 28px; height: 19px; background: #b8b8bc; margin-left: 44px; }
.c4 { width: 100px; height: 10px; background: #d8d8d8; margin-left: 872px; }
.c5 { width: 60px; height: 18px; background: #c4c4c4; margin-left: 30px; }
.c6 { width: 134px; height: 36px; background: #2e62e0; margin-left: 50px; border-radius: 4px; }
.row { height: 71.300px; display: flex; align-items: center; padding-right: 18px; }
.row:nth-child(2) { margin-top: -15px; }
.row .nm { height: 19px; background: #90939c; margin-right: auto; }
.row .nm.lt { background: #bfc0c4; }
.dt { width: 92px; height: 19px; background: #90939c; margin-right: 34px; }
.dt.lt { background: #acaeb3; }
.dt.rd { width: 120px; height: 22px; background: linear-gradient(90deg, #d87478 82%, #c8944c 84%); }
.av { width: 28px; height: 33px; border-radius: 13px; background: #90959f; margin-right: 20px; }
.dd { width: 8px; height: 12px; background: #a4a4a4; }

/* dialog */
.overlay { position: absolute; inset: 0; background: rgba(0,0,0,.6); backdrop-filter: blur(10px); display: flex; align-items: center; justify-content: center; }
.modal { width: 750px; height: 479px; border-radius: 25px; border: 1px solid #fafafa; background: #f4f4f4; overflow: hidden; box-shadow: 0 25px 60px rgba(0,0,0,.3), 0 0 40px rgba(0,0,0,.12); margin-top: 1px; }
.mhead { height: 111px; background: linear-gradient(135deg, #667eea, #764ba2); border-bottom: 1px solid #ada5dc; display: flex; align-items: center; justify-content: space-between; padding: 0 40px; }
.mhead h3 { color: #fff; font-size: 30px; font-weight: 700; white-space: nowrap; letter-spacing: -.01px; }
.mclose { width: 50px; height: 50px; border-radius: 50%; background: rgba(255,255,255,.16); border: 1px solid rgba(255,255,255,.22); display: flex; align-items: center; justify-content: center; box-shadow: 0 5px 14px rgba(0,0,0,.1); }
.mclose svg { margin-top: 2px; }
.mbody { padding: 41px 40px 40px; }
.mbody label { display: block; font-size: 17.500px; line-height: 25px; font-weight: 500; color: #4a4f57; }
textarea { display: block; width: 668px; height: 134px; margin-top: 12px; padding: 10px 15px; border: 1px solid #10b981; border-radius: 5px; background: #f4f4f4; outline: 0; font: 17.500px/28px "Inter", sans-serif; }
textarea::placeholder { color: #8e9097; opacity: 1; }
.mfoot { margin-top: 39px; border-top: 1px solid #e9e9eb; padding-top: 20px; display: flex; justify-content: space-between; }
.mfoot button { height: 54px; font-size: 20px; white-space: nowrap; }
.cancel { width: 108px; border: 1px solid #d1d5db; border-radius: 5px; background: #fff; color: #374151; }
.go { width: 146px; background: linear-gradient(135deg, #667eea, #764ba2); color: #fff; font-weight: 500; letter-spacing: -.1px; }
.activate { position: absolute; left: 1234px; top: 814px; color: #979797; font-family: "Open Sans", sans-serif; white-space: nowrap; }
.activate p { font-size: 24px; line-height: 34px; }
.activate small { display: block; font-size: 17.500px; line-height: 25px; letter-spacing: -.07px; }

/* Windows taskbar */
.taskbar { height: 50px; flex: none; background: linear-gradient(90deg, #e9e9d9 0, #ecebe0 420px, #eeeeec 600px, #eeeeec 1280px, #dfe3ee 1500px, #dbe0ec 1920px); display: flex; font-family: "Open Sans", sans-serif; color: #111; }
.start { width: 60px; display: flex; align-items: center; justify-content: center; }
.search { width: 360px; height: 50px; background: #fff; border: 1px solid #c5c5c5; display: flex; align-items: center; padding-left: 14px; }
.type { margin-left: 15px; font-size: 18px; letter-spacing: -.1px; white-space: nowrap; color: #222; }
.art { margin-left: auto; }
.apps { display: flex; gap: .2px; }
.app { width: 62px; height: 50px; display: flex; align-items: center; justify-content: center; position: relative; flex: none; }
.app.open::after { content: ""; position: absolute; left: 6px; right: 5px; bottom: 0; height: 3px; background: #0078d7; }
.app.cur { background: #fafaf9; }
.app.cur::after { left: 0; right: 0; }
.app.cur svg { margin: 2px 0 0 2px; }
.wa { margin: 6px 0 0 12px; }
text { text-anchor: middle; }
.ba { font-size: 12px; fill: #fff; }
.bn { font: 500 17px "Liberation Sans", sans-serif; }
.wn { font-size: 12px; fill: #fff; font-weight: 700; }
.bn2 { font: 15px "Open Sans", sans-serif; }
.tray { margin-left: auto; width: 599px; display: flex; align-items: center; }
.temp { width: 48px; margin-left: 10px; font-size: 17px; letter-spacing: -.4px; }
.cond { width: 141px; font-size: 17px; letter-spacing: .1px; white-space: nowrap; }
.s2 { margin-left: 15px; }
.s3 { margin-left: 10px; }
.s4 { margin-left: 9px; }
.s5 { margin-left: 11px; }
.s6 { margin-left: 11px; }
.lang { width: 40px; margin-left: 5px; text-align: center; font-size: 14px; line-height: 23px; }
.clock { width: 80px; margin-left: 4px; text-align: center; font-size: 14.500px; line-height: 23px; letter-spacing: -.2px; }
.s7 { margin: 8px 0 0 18px; }
.desk { width: 1px; height: 50px; background: #b5bac6; margin-left: auto; margin-right: 5px; }
```
